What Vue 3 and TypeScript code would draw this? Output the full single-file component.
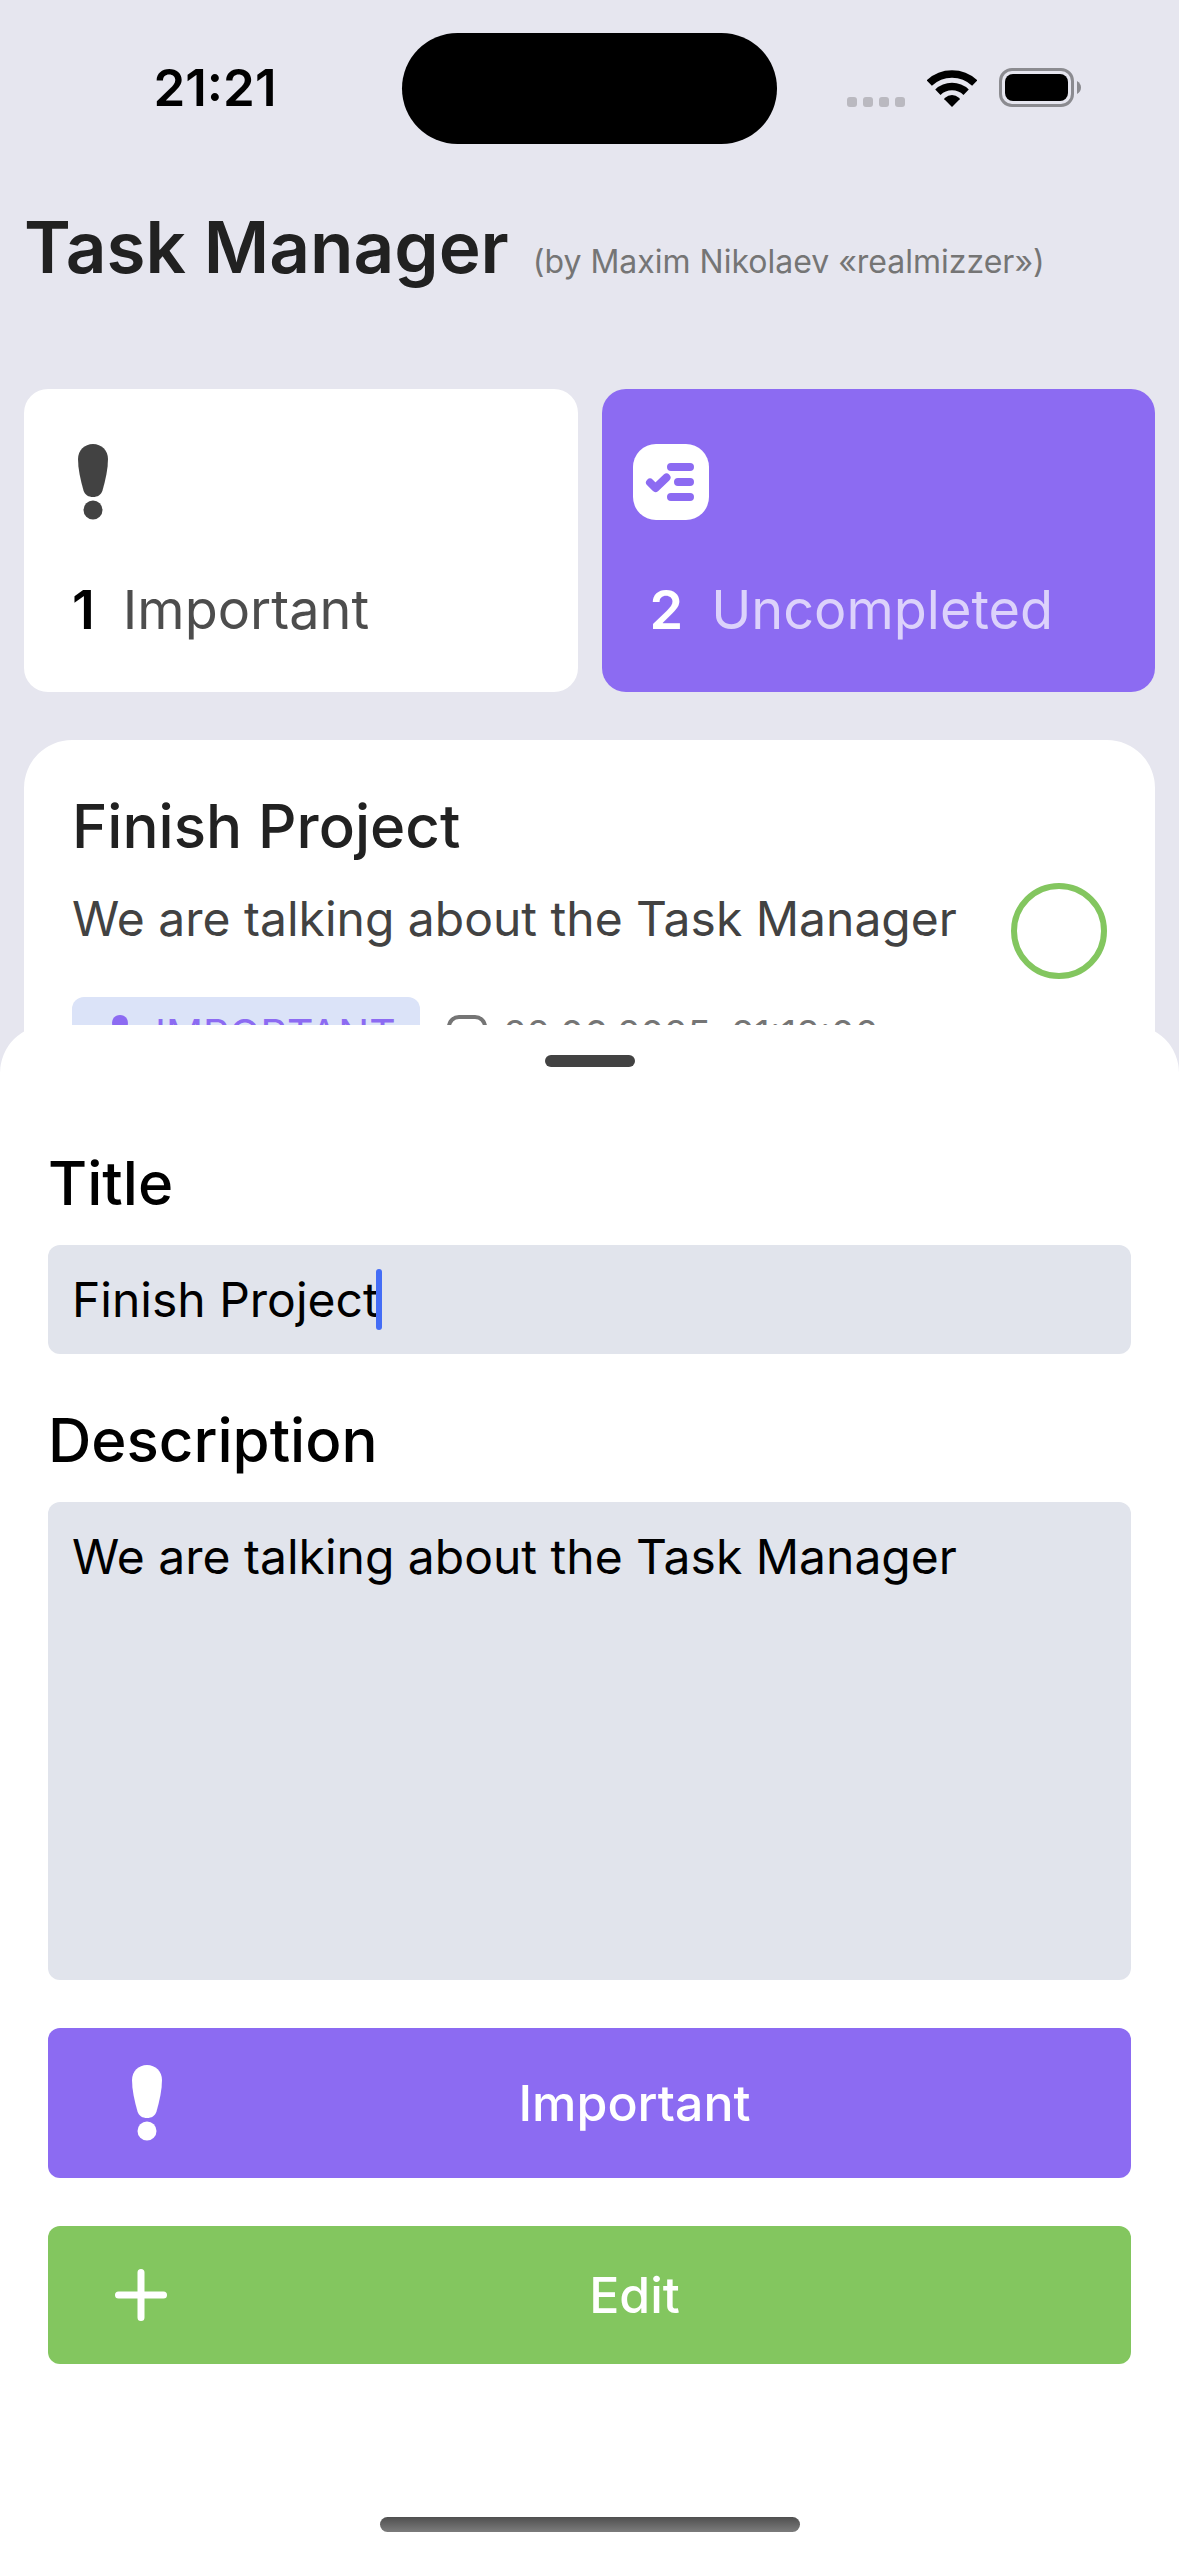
<script setup lang="ts">
import { ref } from 'vue'

interface Task {
  title: string
  description: string
  important: boolean
  date: string
  done: boolean
}

const task = ref<Task>({
  title: 'Finish Project',
  description: 'We are talking about the Task Manager',
  important: true,
  date: '22.06.2025, 21:18:00',
  done: false,
})

const draftTitle = ref(task.value.title)
const draftDescription = ref(task.value.description)
const draftImportant = ref(task.value.important)

function save() {
  task.value.title = draftTitle.value
  task.value.description = draftDescription.value
  task.value.important = draftImportant.value
}
</script>

<template>
  <div class="app">
    <div class="status-bar">
      <span class="time">21:21</span>
      <span class="island"></span>
      <span class="indicators">
        <span class="signal"><i></i><i></i><i></i><i></i></span>
        <svg class="wifi" viewBox="0 0 150 111" aria-hidden="true">
          <path d="M6.7 39.3A99 99 0 0 1 143.3 39.3" fill="none" stroke="#000" stroke-width="23" />
          <path d="M32.6 66.5A61.5 61.5 0 0 1 117.4 66.5" fill="none" stroke="#000" stroke-width="23" />
          <path d="M75 111L52 88Q51 86 53 84Q75 66 97 84Q99 86 98 88Z" />
        </svg>
        <svg class="battery" viewBox="0 0 82 39" aria-hidden="true">
          <rect x="1.5" y="1.5" width="72" height="36" rx="11.5" fill="none" stroke="#8b8b90" stroke-width="3" />
          <rect x="6" y="6" width="63" height="27" rx="8" />
          <path d="M78 13Q82 15.500 82 19.500Q82 23.500 78 26Z" fill="#8b8b90" />
        </svg>
      </span>
    </div>

    <header class="header">
      <h1>Task Manager</h1>
      <small>(by Maxim Nikolaev «realmizzer»)</small>
    </header>

    <main class="content">
      <section class="stats">
        <article class="stat">
          <svg class="icon" viewBox="0 0 102 102" aria-hidden="true">
            <path d="M51 13C59.500 13 66 19.500 66 28C66 38 63.500 49 60.500 59.500C59 64 55.500 66 51 66C46.500 66 43 64 41.500 59.500C38.500 49 36 38 36 28C36 19.500 42.500 13 51 13Z" />
            <circle cx="51" cy="79" r="9.500" />
          </svg>
          <p><b>1</b><span>Important</span></p>
        </article>
        <article class="stat accent">
          <svg class="icon" viewBox="0 0 102 102" aria-hidden="true">
            <rect x="13" y="13" width="76" height="76" rx="23" />
            <path class="cut" d="M51 36H70M58 51H70M51 66H70" stroke-width="8" />
            <path class="cut" d="M30 51.500L35.500 57L46.500 46.500" stroke-width="8" />
          </svg>
          <p><b>2</b><span>Uncompleted</span></p>
        </article>
      </section>

      <article class="task">
        <div class="task-body">
          <h2>{{ task.title }}</h2>
          <p class="task-text">{{ task.description }}</p>
          <div class="meta">
            <span v-if="task.important" class="badge">
              <svg viewBox="0 0 102 102" aria-hidden="true">
                <path d="M51 13C59.500 13 66 19.500 66 28C66 38 63.500 49 60.500 59.500C59 64 55.500 66 51 66C46.500 66 43 64 41.500 59.500C38.500 49 36 38 36 28C36 19.500 42.500 13 51 13Z" />
                <circle cx="51" cy="79" r="9.500" />
              </svg>
              <span>IMPORTANT</span>
            </span>
            <span class="date">
              <svg viewBox="0 0 54 54" aria-hidden="true">
                <rect x="9" y="9" width="36" height="36" rx="10" fill="none" stroke="currentColor" stroke-width="4" />
                <path d="M27 18.500V28L33 33" fill="none" stroke="currentColor" stroke-width="3" stroke-linecap="round" />
              </svg>
              <time>{{ task.date }}</time>
            </span>
          </div>
        </div>
        <input v-model="task.done" class="done" type="checkbox" aria-label="Mark as completed" />
      </article>
    </main>

    <form class="sheet" @submit.prevent="save">
      <span class="handle"></span>

      <label for="title">Title</label>
      <div class="field">
        <input id="title" v-model="draftTitle" type="text" autocomplete="off" />
        <span class="caret"></span>
      </div>

      <label for="description">Description</label>
      <textarea id="description" v-model="draftDescription"></textarea>

      <button class="important" type="button" :aria-pressed="draftImportant" @click="draftImportant = !draftImportant">
        <svg class="icon" viewBox="0 0 102 102" aria-hidden="true">
          <path d="M51 13C59.500 13 66 19.500 66 28C66 38 63.500 49 60.500 59.500C59 64 55.500 66 51 66C46.500 66 43 64 41.500 59.500C38.500 49 36 38 36 28C36 19.500 42.500 13 51 13Z" />
          <circle cx="51" cy="79" r="9.500" />
        </svg>
        <span>Important</span>
      </button>

      <button class="save" type="submit">
        <svg class="plus" viewBox="0 0 90 90" aria-hidden="true">
          <path d="M45 22.500V67.500M22.500 45H67.500" fill="none" stroke="currentColor" stroke-width="7" stroke-linecap="round" />
        </svg>
        <span>Edit</span>
      </button>

      <span class="home"></span>
    </form>
  </div>
</template>

<style>
body {
  background: #e6e6ef;
}
</style>

<style scoped>
.app,
.app * {
  box-sizing: border-box;
}

.app {
  min-height: 100vh;
  background: #e6e6ef;
  color: #000;
  font-family: Inter, "Liberation Sans", sans-serif;
}

h1,
h2,
p {
  margin: 0;
}

.status-bar {
  display: grid;
  grid-template-columns: 1fr 375px 1fr;
  align-items: center;
  justify-items: center;
  height: 177px;
  padding: 0 28px;
}

.time {
  padding-bottom: 2px;
  font-size: 51px;
  line-height: 60px;
  font-weight: 600;
}

.island {
  width: 100%;
  height: 111px;
  border-radius: 56px;
  background: #000;
}

.indicators {
  display: flex;
  align-items: flex-end;
  gap: 22px;
  padding-bottom: 2px;
}

.signal {
  display: flex;
  gap: 6px;
}

.signal i {
  width: 10px;
  height: 10px;
  border-radius: 3px;
  background: #bab9c0;
}

.wifi {
  width: 50px;
  height: 37px;
}

.battery {
  width: 82px;
  height: 39px;
}

.header {
  display: flex;
  align-items: baseline;
  gap: 24px;
  padding: 24px 24px 96px;
}

h1 {
  color: #212121;
  font-size: 71px;
  line-height: 92px;
  font-weight: 600;
}

small {
  color: #757575;
  font-size: 32px;
  white-space: nowrap;
}

.content {
  display: flex;
  flex-direction: column;
  gap: 48px;
  padding: 0 24px;
}

.stats {
  display: grid;
  grid-template-columns: 1fr 1fr;
  gap: 24px;
}

.stat {
  display: flex;
  flex-direction: column;
  gap: 42px;
  padding: 42px 18px 48px;
  border-radius: 24px;
  background: #fff;
}

.icon {
  flex: none;
  width: 102px;
  height: 102px;
  fill: currentColor;
}

.stat .icon {
  color: #424242;
}

.stat p {
  display: flex;
  gap: 28px;
  padding-left: 30px;
  font-size: 54px;
  line-height: 69px;
}

.stat b {
  font-weight: 600;
}

.stat span {
  color: #4d4d4d;
}

.accent {
  background: #8c6bf2;
  color: #fff;
}

.accent .icon {
  color: #fff;
}

.accent span {
  color: #dcd2fb;
}

.cut {
  fill: none;
  stroke: #8c6bf2;
  stroke-linecap: round;
  stroke-linejoin: round;
}

.task {
  display: flex;
  align-items: center;
  justify-content: space-between;
  padding: 48px;
  border-radius: 48px;
  background: #fff;
}

h2 {
  color: #212121;
  font-size: 60px;
  line-height: 76px;
  font-weight: 500;
}

.task-text {
  margin: 24px 0 48px;
  color: #424242;
  font-size: 48px;
  line-height: 61px;
}

.meta,
.badge,
.date {
  display: flex;
  align-items: flex-start;
}

.meta {
  gap: 20px;
  line-height: 52px;
}

.meta svg {
  width: 54px;
  height: 54px;
  fill: currentColor;
}

.badge {
  gap: 8px;
  padding: 11px 24px 11px 21px;
  border-radius: 12px;
  background: #dbe3f8;
  color: #8c6bf2;
  font-size: 41px;
}

.date {
  gap: 10px;
  padding-top: 11px;
  color: #757575;
  font-size: 38px;
}

.done {
  appearance: none;
  flex: none;
  width: 96px;
  height: 96px;
  margin: 0;
  border: 6px solid #83c65f;
  border-radius: 50%;
}

.done:checked {
  background: #83c65f;
}

.sheet {
  position: fixed;
  right: 0;
  bottom: 0;
  left: 0;
  display: flex;
  flex-direction: column;
  padding: 30px 48px 24px;
  border-radius: 48px 48px 0 0;
  background: #fff;
}

.handle {
  align-self: center;
  width: 90px;
  height: 12px;
  margin-bottom: 78px;
  border-radius: 6px;
  background: #424242;
}

label {
  margin-bottom: 24px;
  font-size: 60px;
  line-height: 76px;
  font-weight: 500;
}

.field,
textarea {
  margin-bottom: 48px;
  padding: 24px;
  border-radius: 12px;
  background: #e1e4ec;
}

.field {
  display: flex;
  align-items: center;
}

.field input,
textarea {
  border: 0;
  outline: 0;
  color: #000;
  font-family: inherit;
  font-size: 48px;
  line-height: 61px;
}

.field input {
  field-sizing: content;
  height: 61px;
  padding: 0;
  background: none;
}

.caret {
  width: 6px;
  height: 61px;
  margin-left: -3px;
  border-radius: 3px;
  background: #446df6;
}

textarea {
  width: 100%;
  height: 478px;
  resize: none;
}

button {
  display: flex;
  align-items: center;
  margin-bottom: 48px;
  padding: 24px 48px;
  border: 0;
  border-radius: 12px;
  color: #fff;
  font-family: inherit;
  font-size: 50px;
  line-height: 61px;
  font-weight: 500;
}

button span {
  flex: 1;
  text-align: center;
}

.important {
  padding-right: 60px;
  background: #8c6bf2;
}

.save {
  margin-bottom: 153px;
  background: #83c65f;
}

.plus {
  width: 90px;
  height: 90px;
}

.home {
  align-self: center;
  width: 420px;
  height: 15px;
  border-radius: 8px;
  background: linear-gradient(#4f4f4f, #7c7c7c);
}
</style>
